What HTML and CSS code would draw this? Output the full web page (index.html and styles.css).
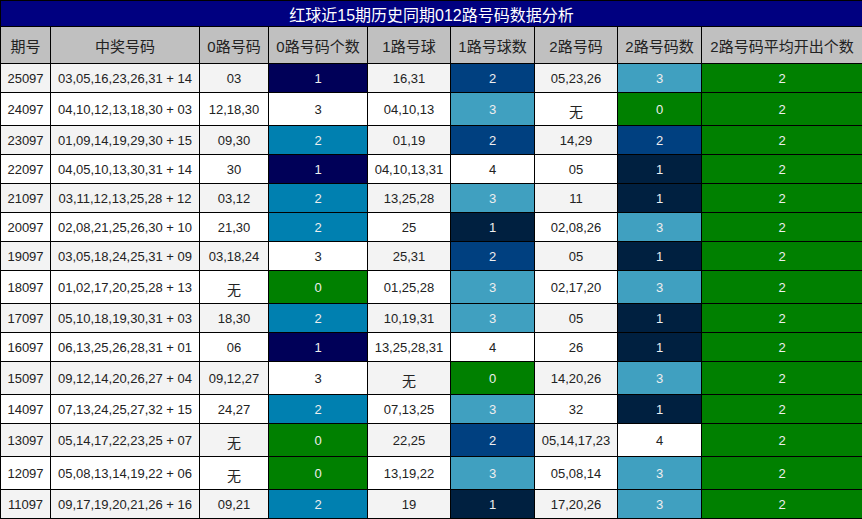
FILE: index.html
```html
<!DOCTYPE html>
<html lang="zh">
<head>
<meta charset="utf-8">
<title>红球近15期历史同期012路号码数据分析</title>
<link rel="stylesheet" href="styles.css">
</head>
<body>
<table class="tbl">
  <colgroup>
    <col class="c1"><col class="c2"><col class="c3"><col class="c4"><col class="c5"><col class="c6"><col class="c7"><col class="c8"><col class="c9">
  </colgroup>
  <thead>
    <tr class="title"><th colspan="9">红球近15期历史同期012路号码数据分析</th></tr>
    <tr class="head">
      <th>期号</th><th>中奖号码</th><th>0路号码</th><th>0路号码个数</th><th>1路号球</th><th>1路号球数</th><th>2路号码</th><th>2路号码数</th><th>2路号码平均开出个数</th>
    </tr>
  </thead>
  <tbody>
    <tr class="odd"><td>25097</td><td>03,05,16,23,26,31 + 14</td><td>03</td><td class="k1">1</td><td>16,31</td><td class="m2">2</td><td>05,23,26</td><td class="m3">3</td><td class="g">2</td></tr>
    <tr class="even tall"><td>24097</td><td>04,10,12,13,18,30 + 03</td><td>12,18,30</td><td class="w">3</td><td>04,10,13</td><td class="m3">3</td><td><span class="none">无</span></td><td class="g">0</td><td class="g">2</td></tr>
    <tr class="odd"><td>23097</td><td>01,09,14,19,29,30 + 15</td><td>09,30</td><td class="k2">2</td><td>01,19</td><td class="m2">2</td><td>14,29</td><td class="m2">2</td><td class="g">2</td></tr>
    <tr class="even"><td>22097</td><td>04,05,10,13,30,31 + 14</td><td>30</td><td class="k1">1</td><td>04,10,13,31</td><td class="w">4</td><td>05</td><td class="m1">1</td><td class="g">2</td></tr>
    <tr class="odd"><td>21097</td><td>03,11,12,13,25,28 + 12</td><td>03,12</td><td class="k2">2</td><td>13,25,28</td><td class="m3">3</td><td>11</td><td class="m1">1</td><td class="g">2</td></tr>
    <tr class="even"><td>20097</td><td>02,08,21,25,26,30 + 10</td><td>21,30</td><td class="k2">2</td><td>25</td><td class="m1">1</td><td>02,08,26</td><td class="m3">3</td><td class="g">2</td></tr>
    <tr class="odd"><td>19097</td><td>03,05,18,24,25,31 + 09</td><td>03,18,24</td><td class="w">3</td><td>25,31</td><td class="m2">2</td><td>05</td><td class="m1">1</td><td class="g">2</td></tr>
    <tr class="even tall"><td>18097</td><td>01,02,17,20,25,28 + 13</td><td><span class="none">无</span></td><td class="g">0</td><td>01,25,28</td><td class="m3">3</td><td>02,17,20</td><td class="m3">3</td><td class="g">2</td></tr>
    <tr class="odd"><td>17097</td><td>05,10,18,19,30,31 + 03</td><td>18,30</td><td class="k2">2</td><td>10,19,31</td><td class="m3">3</td><td>05</td><td class="m1">1</td><td class="g">2</td></tr>
    <tr class="even"><td>16097</td><td>06,13,25,26,28,31 + 01</td><td>06</td><td class="k1">1</td><td>13,25,28,31</td><td class="w">4</td><td>26</td><td class="m1">1</td><td class="g">2</td></tr>
    <tr class="odd tall"><td>15097</td><td>09,12,14,20,26,27 + 04</td><td>09,12,27</td><td class="w">3</td><td><span class="none">无</span></td><td class="g">0</td><td>14,20,26</td><td class="m3">3</td><td class="g">2</td></tr>
    <tr class="even"><td>14097</td><td>07,13,24,25,27,32 + 15</td><td>24,27</td><td class="k2">2</td><td>07,13,25</td><td class="m3">3</td><td>32</td><td class="m1">1</td><td class="g">2</td></tr>
    <tr class="odd tall"><td>13097</td><td>05,14,17,22,23,25 + 07</td><td><span class="none">无</span></td><td class="g">0</td><td>22,25</td><td class="m2">2</td><td>05,14,17,23</td><td class="w">4</td><td class="g">2</td></tr>
    <tr class="even tall"><td>12097</td><td>05,08,13,14,19,22 + 06</td><td><span class="none">无</span></td><td class="g">0</td><td>13,19,22</td><td class="m3">3</td><td>05,08,14</td><td class="m3">3</td><td class="g">2</td></tr>
    <tr class="odd"><td>11097</td><td>09,17,19,20,21,26 + 16</td><td>09,21</td><td class="k2">2</td><td>19</td><td class="m1">1</td><td>17,20,26</td><td class="m3">3</td><td class="g">2</td></tr>
  </tbody>
</table>
</body>
</html>
```

FILE: styles.css
```css
html, body {
  margin: 0;
  padding: 0;
  background: #ffffff;
}

.tbl {
  border-collapse: collapse;
  width: 862px;
  table-layout: fixed;
  font-family: "Liberation Sans", Arial, "Noto Sans CJK SC", sans-serif;
  font-size: 13px;
  color: #222;
}

.c1 { width: 50px; }
.c2 { width: 149px; }
.c3 { width: 69px; }
.c4 { width: 99px; }
.c5 { width: 83px; }
.c6 { width: 84px; }
.c7 { width: 83px; }
.c8 { width: 84px; }
.c9 { width: 161px; }

.tbl th,
.tbl td {
  border: 1px solid #000;
  padding: 0;
  text-align: center;
  font-weight: normal;
}

.title th {
  background: #000080;
  color: #fff;
  height: 25px;
  font-size: 16px;
  font-family: "Liberation Sans", "Noto Sans CJK SC", sans-serif;
}

.head th {
  background: #c0c0c0;
  color: #222;
  height: 36px;
  font-size: 15px;
  font-family: "Liberation Sans", "Noto Sans CJK SC", sans-serif;
}

.tbl tbody tr { height: 29px; }
.tbl tbody tr.tall { height: 33px; }

.odd td { background: #f3f3f3; }
.even td { background: #ffffff; }

.none {
  font-family: "Noto Sans CJK SC", sans-serif;
  font-size: 14px;
  position: relative;
  top: 2px;
}

.tbl td.w { background: #ffffff; color: #222; }
.tbl td.k1 { background: #000058; color: #eee; }
.tbl td.k2 { background: #0080b0; color: #eee; }
.tbl td.m1 { background: #002040; color: #eee; }
.tbl td.m2 { background: #004080; color: #eee; }
.tbl td.m3 { background: #40a0c0; color: #eee; }
.tbl td.g { background: #008000; color: #eee; }
```
